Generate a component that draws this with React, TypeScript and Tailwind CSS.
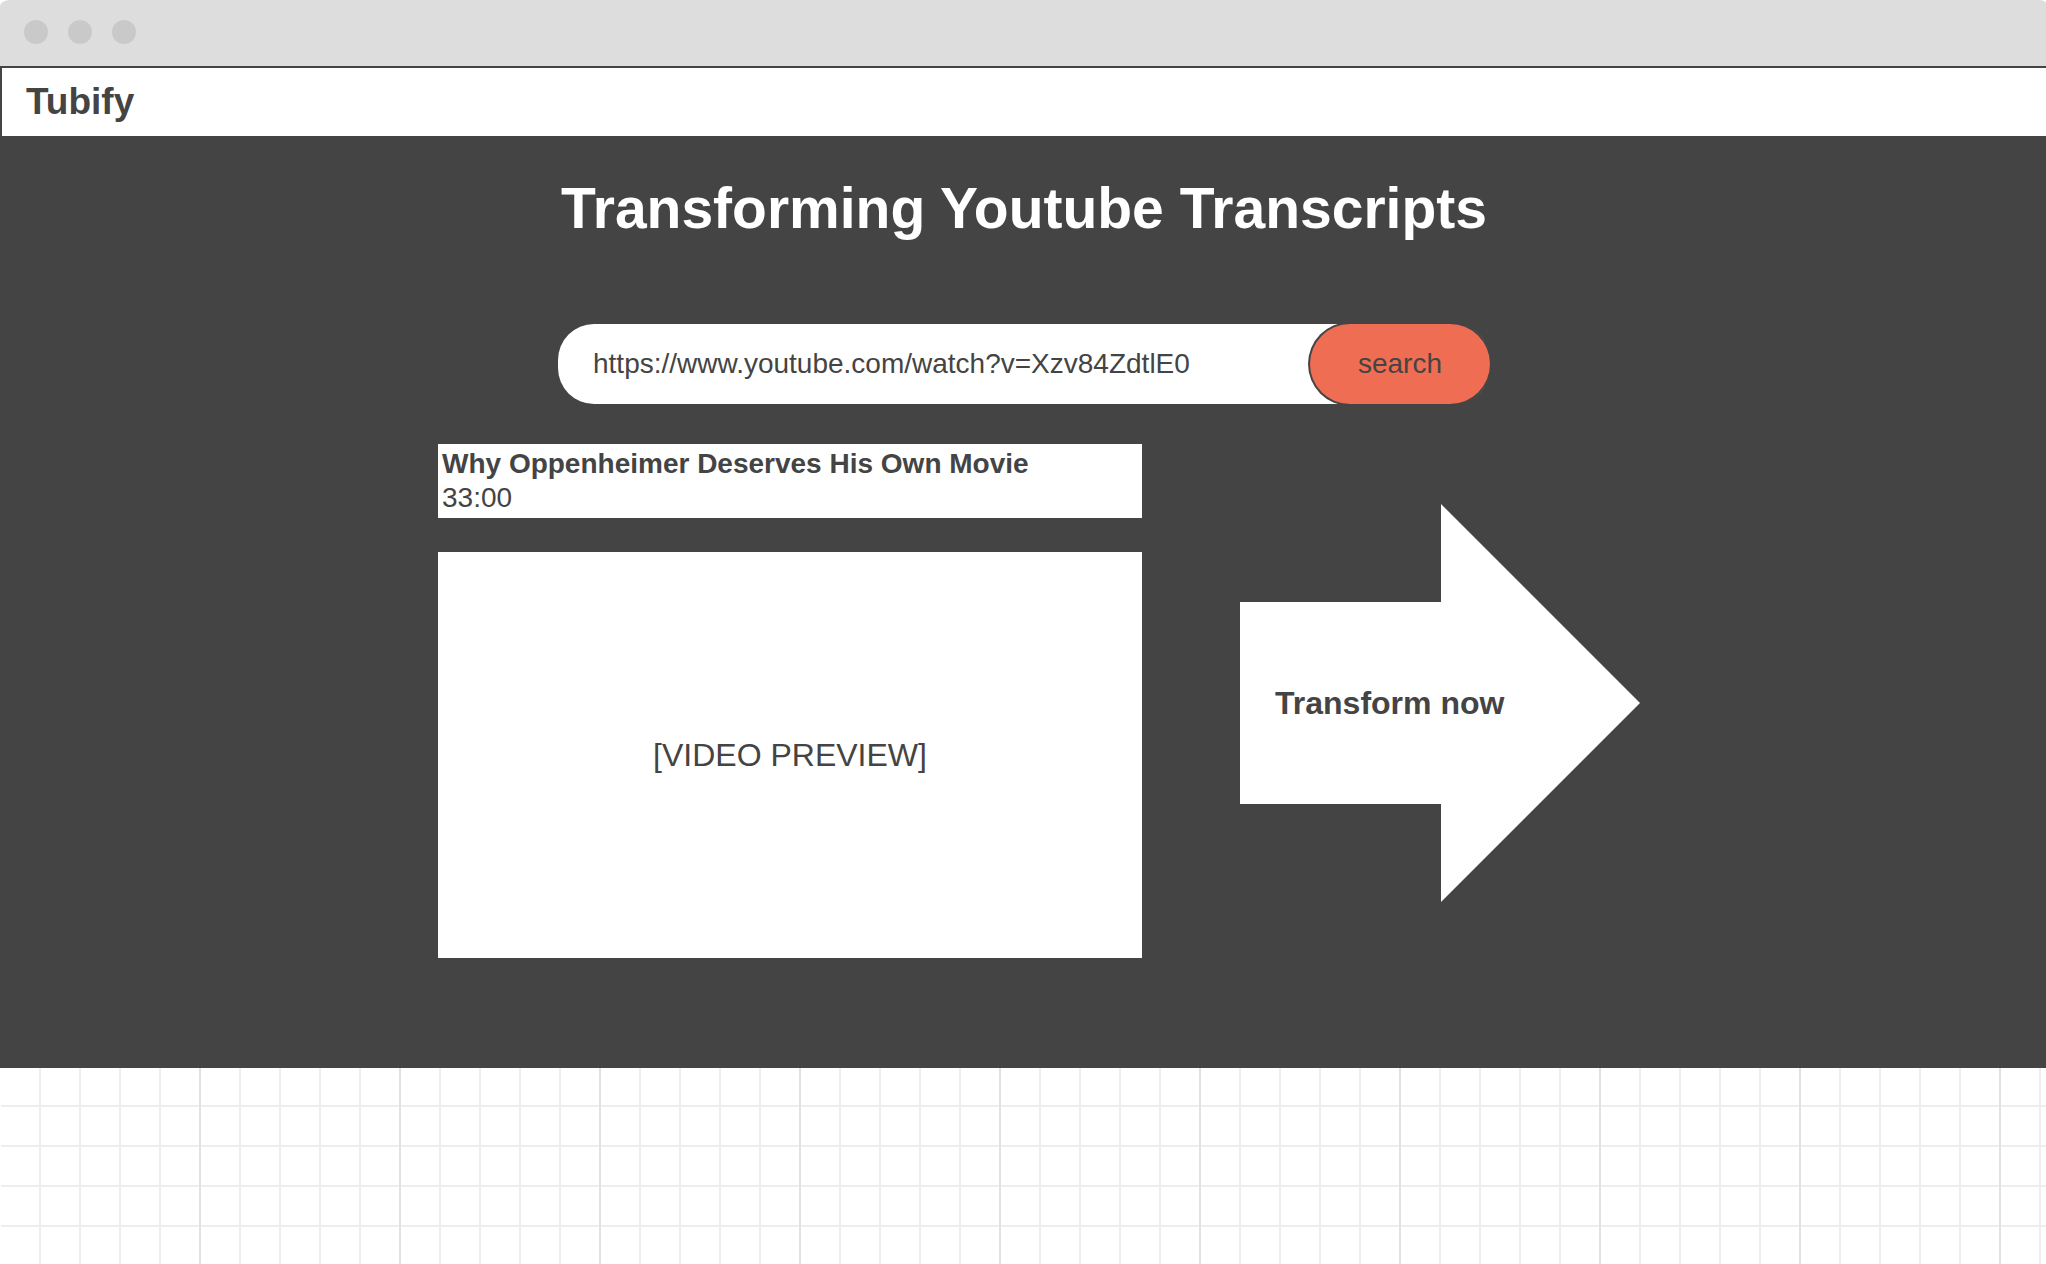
import { useState } from 'react';

function WindowBar() {
  return (
    <div className="bg-white">
      <div className="flex h-[66px] items-center gap-5 bg-[#dddddd] px-6 pb-0.5 [border-top-left-radius:10px_6px] [border-top-right-radius:7px_3px]">
        <span className="size-6 rounded-full bg-[#c9c9c9]" />
        <span className="size-6 rounded-full bg-[#c9c9c9]" />
        <span className="size-6 rounded-full bg-[#c9c9c9]" />
      </div>
    </div>
  );
}

function SearchForm() {
  const [url, setUrl] = useState('https://www.youtube.com/watch?v=Xzv84ZdtlE0');
  return (
    <form
      className="mt-[84px] flex h-20 w-full max-w-[932px] rounded-[36px] bg-white"
      onSubmit={(e) => e.preventDefault()}
    >
      <input
        type="text"
        aria-label="Video URL"
        value={url}
        onChange={(e) => setUrl(e.target.value)}
        className="min-w-0 flex-1 rounded-l-[36px] bg-transparent pl-[35px] text-[28px] outline-none"
      />
      <button
        type="submit"
        className="w-[180px] rounded-full bg-[#ef6d52] text-[28px] ring-2 ring-[#444444]"
      >
        search
      </button>
    </form>
  );
}

function TransformButton() {
  return (
    <button
      type="button"
      className="relative mt-[60px] flex h-[398px] w-[400px] shrink-0 items-center self-start pl-[35px] text-[32px] font-bold"
    >
      <svg
        viewBox="0 0 400 398"
        className="absolute inset-0 size-full"
        fill="#ffffff"
        aria-hidden="true"
      >
        <path d="M0 98H201V0L400 199L201 398V300H0Z" />
      </svg>
      <span className="relative">Transform now</span>
    </button>
  );
}

export default function App() {
  return (
    <div className="flex min-h-screen flex-col bg-white font-['Liberation_Sans',Arial,sans-serif] text-[#444444]">
      <WindowBar />
      <header className="flex h-[70px] items-center border-t-2 border-l-2 border-[#444444] bg-white pl-6">
        <a href="#" className="text-[37px] font-bold">
          Tubify
        </a>
      </header>
      <main className="flex flex-col items-center border-l-2 border-[#444444] bg-[#444444] pt-10 pb-[110px]">
        <h1 className="text-center text-[57px] leading-[64px] font-bold text-white">
          Transforming Youtube Transcripts
        </h1>
        <SearchForm />
        <div className="mt-10 flex w-full max-w-[1232px] justify-between pl-[30px]">
          <section className="flex w-[704px] flex-col gap-[34px]">
            <div className="flex h-[74px] flex-col justify-center bg-white px-1 text-[28px] leading-[34px]">
              <h2 className="font-bold">Why Oppenheimer Deserves His Own Movie</h2>
              <p>33:00</p>
            </div>
            <div className="flex h-[406px] items-center justify-center bg-white text-[32px]">
              [VIDEO PREVIEW]
            </div>
          </section>
          <TransformButton />
        </div>
      </main>
      <div className="flex-1 border-l border-white bg-[linear-gradient(to_right,#e1e1e1_2px,transparent_2px),linear-gradient(to_right,#eeeeee_2px,transparent_2px),linear-gradient(to_bottom,#eeeeee_2px,transparent_2px)] bg-[length:200px_100%,40px_100%,100%_40px] bg-[position:-2px_0,-2px_0,0_37px]" />
    </div>
  );
}
